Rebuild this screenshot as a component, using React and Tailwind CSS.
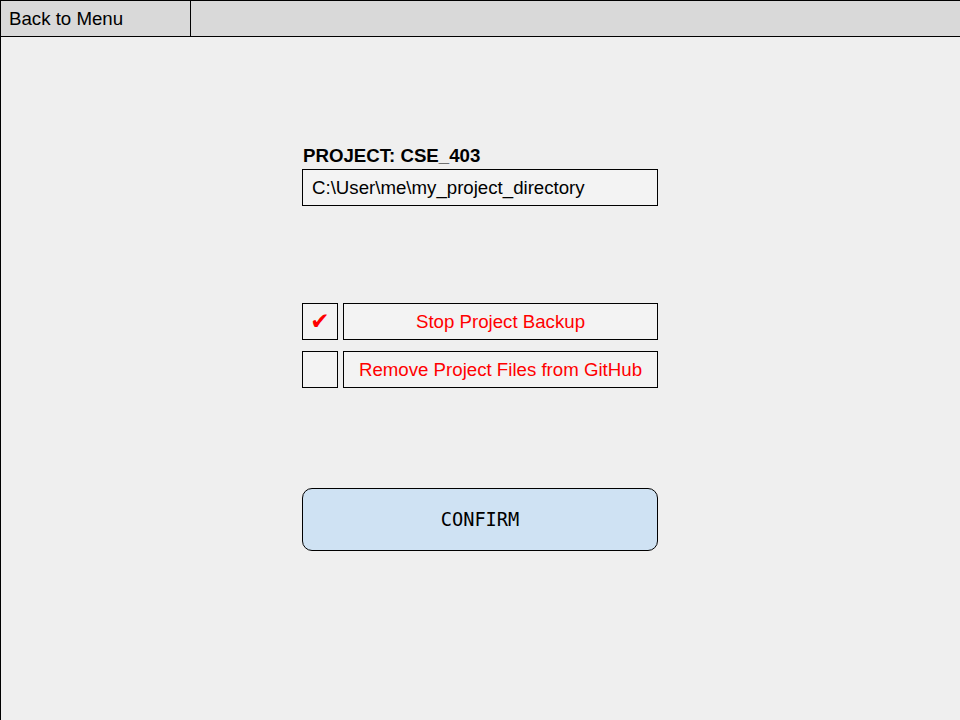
export default function App() {
  const font = { fontFamily: '"Liberation Sans", Arial, sans-serif' };
  return (
    <div className="w-[960px] h-[720px] flex flex-col bg-[#efefef] border-l border-black overflow-hidden" style={font}>
      {/* top bar */}
      <div className="h-[37px] flex bg-[#d9d9d9] border-t border-b border-black shrink-0">
        <div className="w-[190px] border-r border-black flex items-center pl-[8px] text-[18.67px] text-black">
          Back to Menu
        </div>
        <div className="flex-1"></div>
      </div>

      <div className="flex-1 flex flex-col w-[356px] ml-[301px] pt-[108px]">
        <div className="font-bold text-[18.67px] leading-[21px] text-black pl-[1px] mb-[3px]">PROJECT: CSE_403</div>
        <div className="h-[37px] border border-black bg-[#f3f3f3] flex items-center pl-[9px] text-[18.67px] text-black">
          C:\User\me\my_project_directory
        </div>

        <div className="flex flex-col gap-[11px] mt-[97px]">
          <div className="flex gap-[5px] h-[37px]">
            <div className="w-[36px] border border-black bg-[#f3f3f3] flex items-center justify-center text-[#ff0000] text-[23px]" style={{ fontFamily: '"DejaVu Sans", sans-serif' }}>
              ✔
            </div>
            <div className="flex-1 border border-black bg-[#f3f3f3] flex items-center justify-center text-[18.67px] text-[#ff0000]">
              Stop Project Backup
            </div>
          </div>
          <div className="flex gap-[5px] h-[37px]">
            <div className="w-[36px] border border-black bg-[#f3f3f3]"></div>
            <div className="flex-1 border border-black bg-[#f3f3f3] flex items-center justify-center text-[18.67px] text-[#ff0000]">
              Remove Project Files from GitHub
            </div>
          </div>
        </div>

        <div
          className="mt-[100px] h-[63px] rounded-[10px] border border-black bg-[#cfe2f3] flex items-center justify-center text-[18.67px] text-black"
          style={{ fontFamily: '"DejaVu Sans Mono", "Liberation Mono", monospace' }}
        >
          CONFIRM
        </div>
      </div>
    </div>
  );
}
